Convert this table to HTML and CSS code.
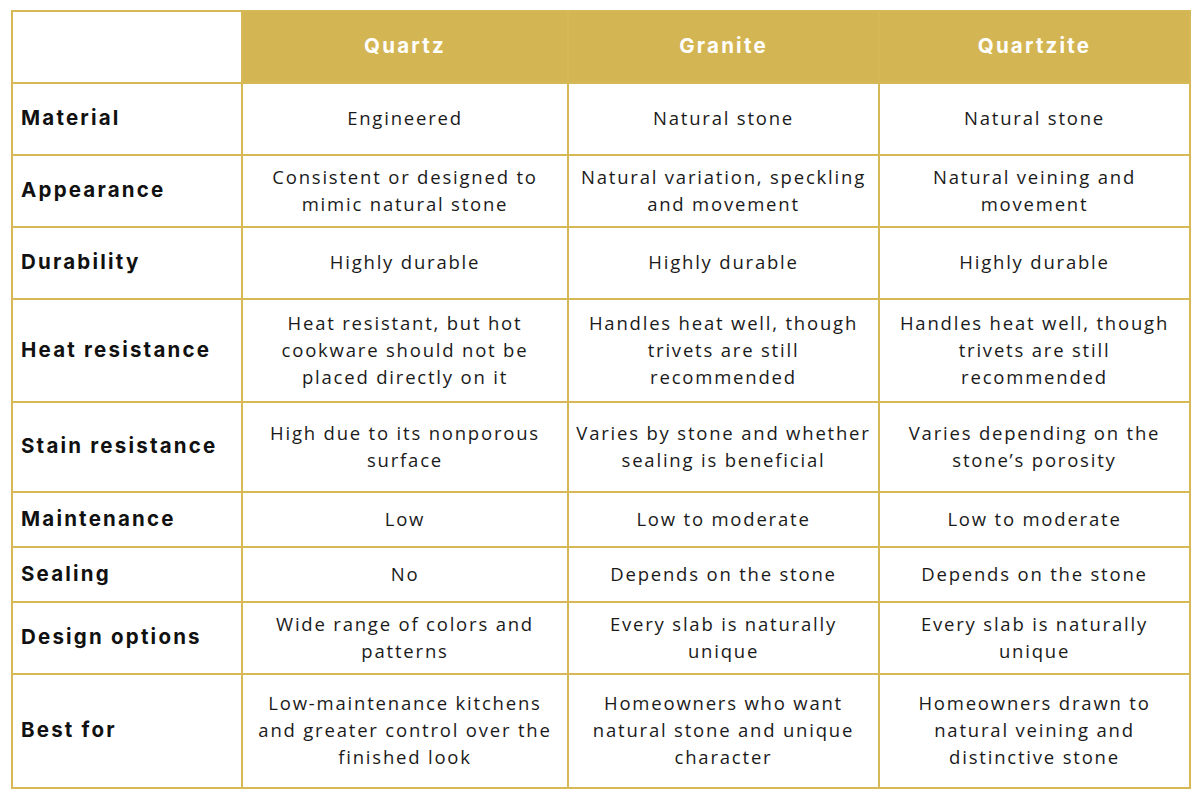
FILE: index.html
```html
<!DOCTYPE html>
<html>
<head>
<meta charset="utf-8">
<link rel="stylesheet" href="styles.css">
</head>
<body>
<table class="cmp">
  <colgroup>
    <col class="c-label"><col class="c-quartz"><col class="c-granite"><col class="c-quartzite">
  </colgroup>
  <thead>
    <tr class="r-head">
      <th class="blank"></th>
      <th>Quartz</th>
      <th>Granite</th>
      <th>Quartzite</th>
    </tr>
  </thead>
  <tbody>
    <tr class="r72"><th>Material</th><td>Engineered</td><td>Natural stone</td><td>Natural stone</td></tr>
    <tr class="r72"><th>Appearance</th><td>Consistent or designed to mimic natural stone</td><td>Natural variation, speckling and movement</td><td>Natural veining and movement</td></tr>
    <tr class="r72"><th>Durability</th><td>Highly durable</td><td>Highly durable</td><td>Highly durable</td></tr>
    <tr class="r103"><th>Heat resistance</th><td>Heat resistant, but hot cookware should not be placed directly on it</td><td>Handles heat well, though trivets are still recommended</td><td>Handles heat well, though trivets are still recommended</td></tr>
    <tr class="r90"><th>Stain resistance</th><td>High due to its nonporous surface</td><td>Varies by stone and whether sealing is beneficial</td><td>Varies depending on the stone’s porosity</td></tr>
    <tr class="r55"><th>Maintenance</th><td>Low</td><td>Low to moderate</td><td>Low to moderate</td></tr>
    <tr class="r55"><th>Sealing</th><td>No</td><td>Depends on the stone</td><td>Depends on the stone</td></tr>
    <tr class="r72"><th>Design options</th><td>Wide range of colors and patterns</td><td>Every slab is naturally unique</td><td>Every slab is naturally unique</td></tr>
    <tr class="r114"><th>Best for</th><td>Low-maintenance kitchens and greater control over the finished look</td><td>Homeowners who want natural stone and unique character</td><td>Homeowners drawn to natural veining and distinctive stone</td></tr>
  </tbody>
</table>
</body>
</html>
```
FILE: styles.css
```css
html, body {
  margin: 0;
  padding: 0;
  background: #ffffff;
}
body {
  padding: 10px 0 0 11px;
}
.cmp {
  border-collapse: collapse;
  table-layout: fixed;
  width: 1178px;
  font-family: "Open Sans", "Liberation Sans", sans-serif;
  color: #1a1a1a;
}
.c-label { width: 230px; }
.c-quartz { width: 326px; }
.c-granite { width: 311px; }
.c-quartzite { width: 311px; }
.cmp th, .cmp td {
  border: 2px solid #d6b857;
  padding: 0 5px 3px;
  vertical-align: middle;
}
.cmp td {
  text-align: center;
  font-size: 18.5px;
  line-height: 27px;
  letter-spacing: 1.8px;
  font-weight: 400;
}
.cmp tbody th {
  text-align: left;
  padding-left: 8px;
  font-family: "Inter", "Liberation Sans", sans-serif;
  font-weight: 700;
  font-size: 20.5px;
  letter-spacing: 2.2px;
  color: #111111;
}
.r-head { height: 72px; }
.r-head th {
  background: #d4b553;
  color: #ffffff;
  font-family: "Inter", "Liberation Sans", sans-serif;
  font-weight: 700;
  font-size: 20.5px;
  letter-spacing: 2.2px;
  text-align: center;
}
.r-head th.blank { background: #ffffff; }
.r72 { height: 72px; }
.r103 { height: 103px; }
.r90 { height: 90px; }
.r55 { height: 55px; }
.r114 { height: 114px; }
```
